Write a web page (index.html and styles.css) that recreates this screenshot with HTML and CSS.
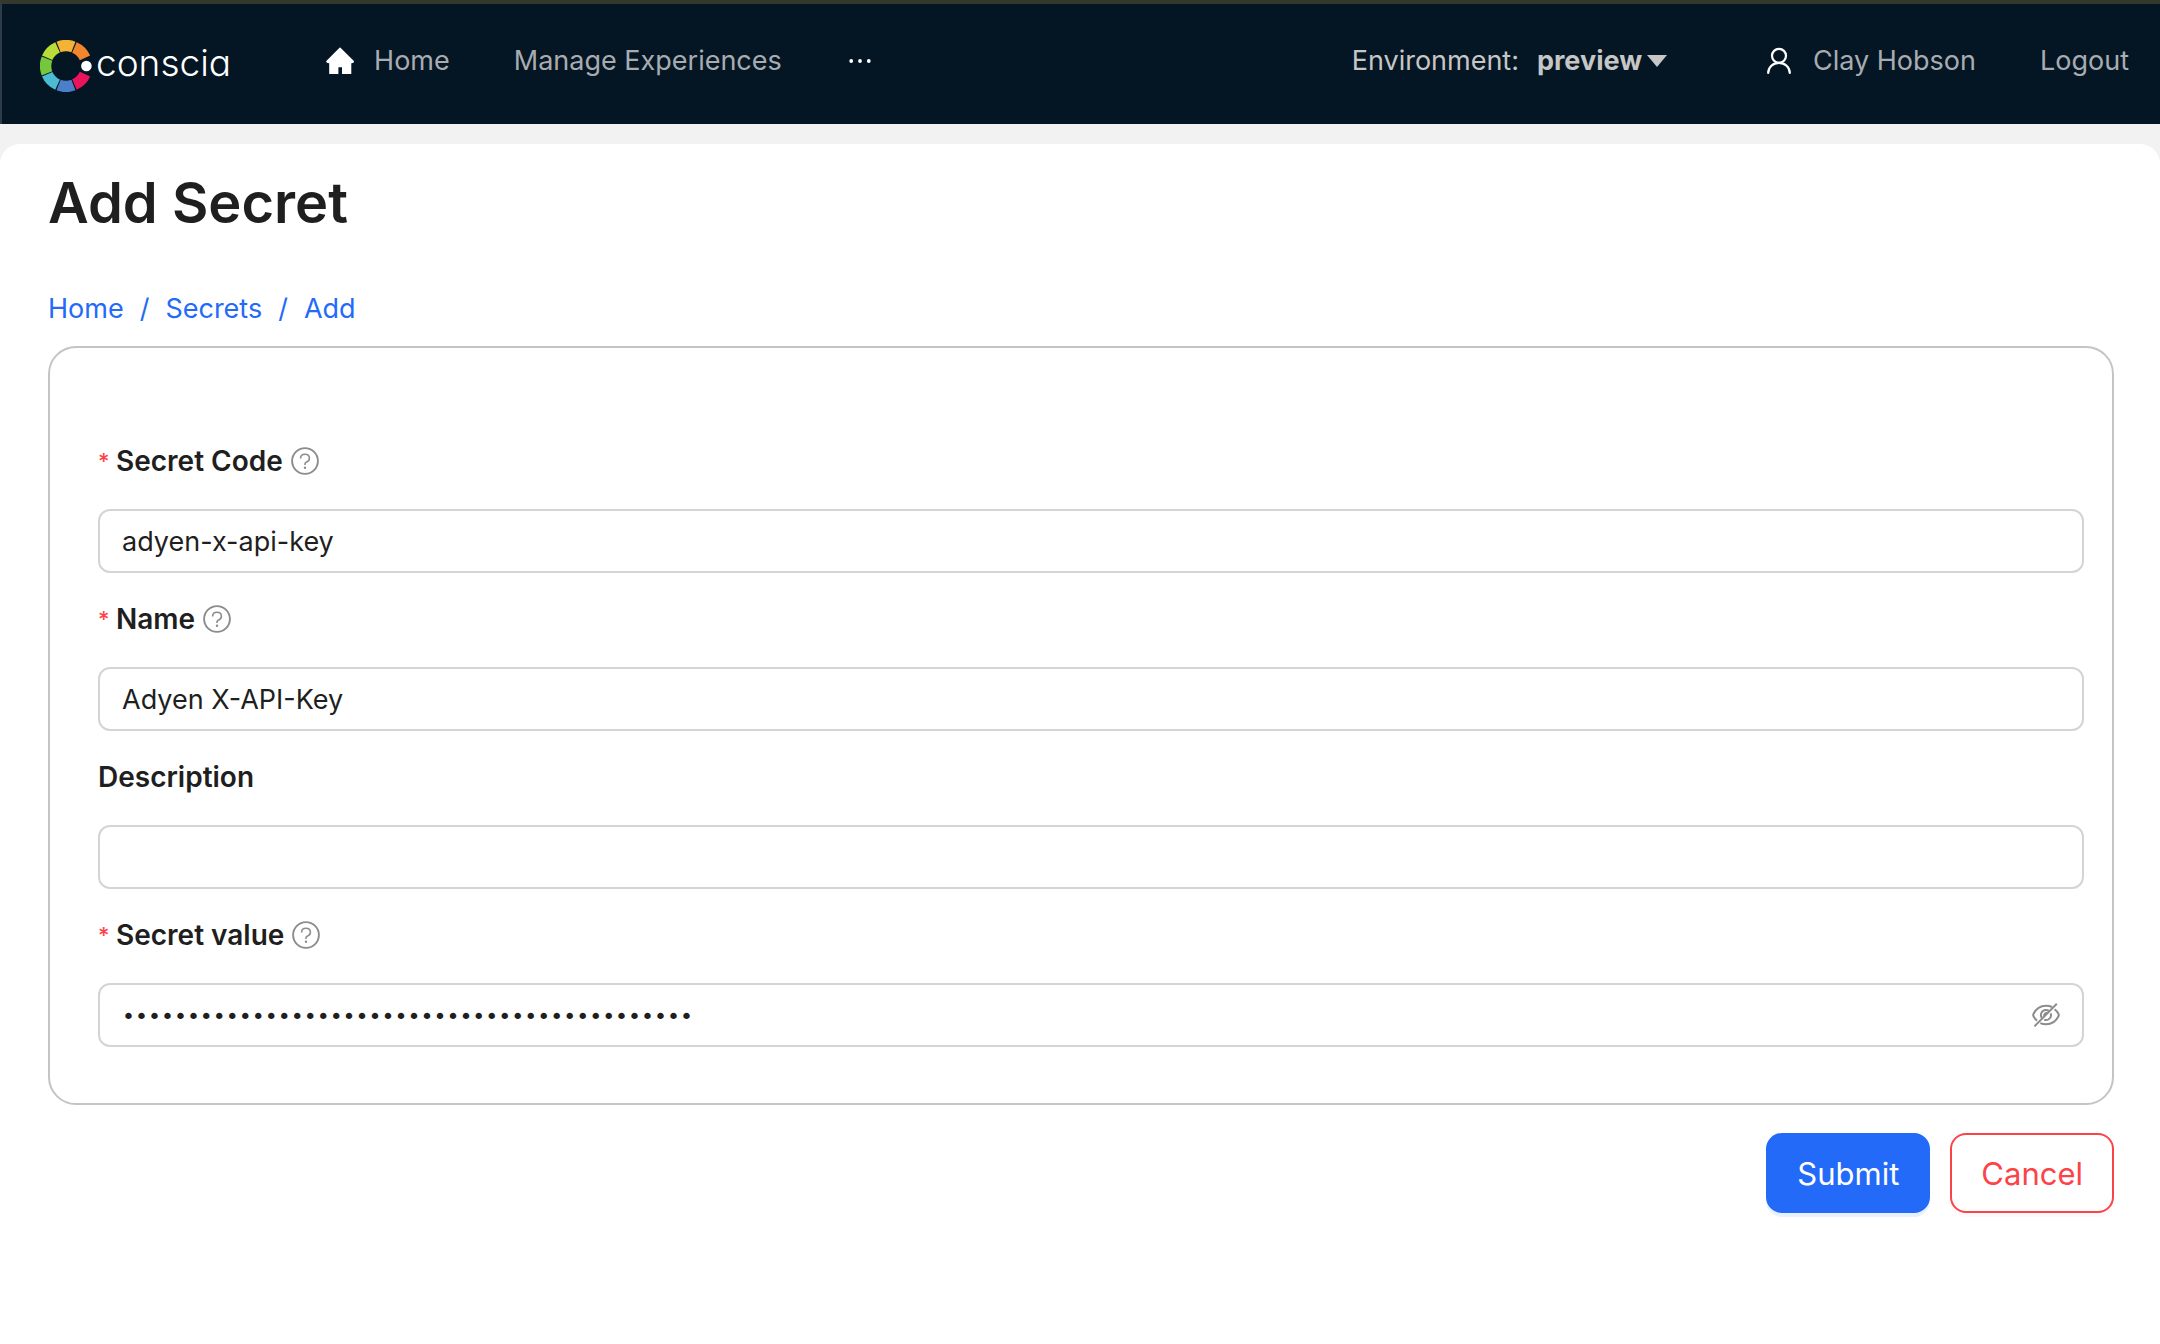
FILE: index.html
```html
<!DOCTYPE html>
<html lang="en">
<head>
<meta charset="utf-8">
<title>Add Secret</title>
<meta name="viewport" content="width=device-width, initial-scale=1">
<link rel="stylesheet" href="styles.css">
</head>
<body>
<svg class="sprite" aria-hidden="true">
  <symbol id="help" viewBox="0 0 28 28">
    <circle cx="14" cy="14" r="12.9" fill="none" stroke="currentColor" stroke-width="1.9"/>
    <path d="M9.6 11.4C9.6 8.9 11.5 7.3 14 7.3S18.4 8.9 18.4 11.2C18.4 13 17.3 14.2 15.6 14.9C14.5 15.3 14 16 14 17V18" fill="none" stroke="currentColor" stroke-width="1.6"/>
    <circle cx="14" cy="20.8" r="1.2" fill="currentColor"/>
  </symbol>
</svg>
<header class="topbar">
  <a class="logo" href="#" aria-label="conscia">
    <svg class="logo-mark" viewBox="-26 -26 52 52" aria-hidden="true">
      <g fill="none" stroke-width="11.4">
        <path stroke="#f3852d" d="M8.4 -18.6A20.4 20.4 0 0 1 19 -8.2"/>
        <path stroke="#f5b335" d="M-7.4 -19A20.4 20.4 0 0 1 7.4 -19"/>
        <path stroke="#b9dc39" d="M-18.8 -8.2A20.4 20.4 0 0 1 -8.4 -18.6"/>
        <path stroke="#76c63e" d="M-19 7.4A20.4 20.4 0 0 1 -19 -7.4"/>
        <path stroke="#4bbcd2" d="M-8.4 18.6A20.4 20.4 0 0 1 -18.8 8.2"/>
        <path stroke="#4c7fc9" d="M7.4 19A20.4 20.4 0 0 1 -7.4 19"/>
        <path stroke="#e9145c" d="M19 8.2A20.4 20.4 0 0 1 8.4 18.6"/>
      </g>
      <circle cx="20.4" cy="0" r="5.3" fill="#fff"/>
    </svg>
    <span class="logo-name">conscia</span>
  </a>
  <nav class="menu">
    <a class="menu-link" href="#">
      <svg class="icon" viewBox="0 0 28 28" aria-hidden="true"><path fill="#fff" d="M14.3 0.5L27.4 13.4Q28.4 14.5 27.6 15.6Q27 16.2 25.3 16.2V27H16V20.2H12.4V27H3.2V16.2Q1.4 16.2.6 15.5Q-.2 14.4.8 13.4L13.5 .7Q14 .2 14.3 .5Z"/></svg>
      <span>Home</span>
    </a>
    <a class="menu-link" href="#">Manage Experiences</a>
    <button class="more" type="button" aria-label="More">
      <svg viewBox="0 0 28 28" class="icon" aria-hidden="true"><g fill="#fff"><circle cx="5.2" cy="14" r="1.9"/><circle cx="14" cy="14" r="1.9"/><circle cx="22.8" cy="14" r="1.9"/></g></svg>
    </button>
  </nav>
  <div class="account">
    <div class="environment">
      <label for="environment">Environment:</label>
      <select id="environment"><option>preview</option></select>
      <svg class="caret" viewBox="0 0 20 12" aria-hidden="true"><path fill="#c6c6c6" d="M0 0H20L10 12Z"/></svg>
    </div>
    <a class="menu-link" href="#">
      <svg class="icon" viewBox="0 0 28 28" aria-hidden="true"><g fill="none" stroke="#fff" stroke-width="2.2" stroke-linecap="round"><circle cx="14" cy="8.8" r="7"/><path d="M3.2 26A10.8 10.2 0 0 1 24.8 26"/></g></svg>
      <span>Clay Hobson</span>
    </a>
    <a class="menu-link" href="#">Logout</a>
  </div>
</header>
<main class="page">
  <h1 class="title">Add Secret</h1>
  <nav class="crumbs" aria-label="Breadcrumb">
    <a href="#">Home</a><span>/</span><a href="#">Secrets</a><span>/</span><a href="#">Add</a>
  </nav>
  <form>
    <div class="card">
      <div class="field">
        <div class="label"><span class="star">*</span><label for="code">Secret Code</label><svg class="help"><use href="#help"/></svg></div>
        <input class="input" id="code" type="text" value="adyen-x-api-key">
      </div>
      <div class="field">
        <div class="label"><span class="star">*</span><label for="name">Name</label><svg class="help"><use href="#help"/></svg></div>
        <input class="input" id="name" type="text" value="Adyen X-API-Key">
      </div>
      <div class="field">
        <div class="label"><label for="description">Description</label></div>
        <input class="input" id="description" type="text">
      </div>
      <div class="field">
        <div class="label"><span class="star">*</span><label for="value">Secret value</label><svg class="help"><use href="#help"/></svg></div>
        <div class="input secret">
          <input id="value" type="password" value="01234567890123456789012345678901234567890123">
          <button class="reveal" type="button" aria-label="Show secret value">
            <svg class="icon" viewBox="0 0 28 28" aria-hidden="true"><g fill="none" stroke="currentColor" stroke-width="2"><path d="M20 6Q17.3 4.7 14 4.7C8.5 4.7 4 7.6 1.4 13Q1 14 1.4 15Q2.7 17.7 5 19.8"/><path d="M22.6 8.2Q25.2 10.2 26.6 13Q27 14 26.6 15C24 20.4 19.5 23.3 14 23.3Q10.9 23.3 8.3 22.2"/><path d="M17 9.8Q15.6 9 14 9A5 5 0 0 0 9.8 16.8"/><path d="M18.7 12.4A5 5 0 0 1 12.2 18.7"/><path d="M15.6 12.2A2.4 2.4 0 0 0 12.4 15.4"/><path d="M2.4 25.4L24.8 2.8"/></g></svg>
          </button>
        </div>
      </div>
    </div>
    <div class="actions">
      <button class="button primary" type="submit">Submit</button>
      <button class="button danger" type="button">Cancel</button>
    </div>
  </form>
</main>
</body>
</html>
```
FILE: styles.css
```css
* {
  box-sizing: border-box;
}

body {
  margin: 0;
  background: #f2f2f2;
  color: #1f1f1f;
  font-family: Inter, "Liberation Sans", sans-serif;
  font-size: 27px;
  line-height: 44px;
}

a {
  color: inherit;
  text-decoration: none;
}

input,
select,
button {
  margin: 0;
  padding: 0;
  border: 0;
  background: none;
  color: inherit;
  font: inherit;
}

.sprite {
  display: none;
}

.icon {
  display: block;
  flex: none;
  width: 28px;
  height: 28px;
}

/* Top bar */
.topbar {
  display: flex;
  align-items: center;
  height: 124px;
  padding: 0 31px 6px 38px;
  border-top: 4px solid #333a2d;
  border-left: 2px solid #2f3b46;
  background: #041523;
  color: #a8acb1;
}

.logo {
  display: flex;
  align-items: center;
  gap: 4px;
  padding-top: 10px;
  color: #fff;
}

.logo-mark {
  width: 52px;
  height: 52px;
}

.logo-name {
  margin-bottom: 6px;
  font-size: 37px;
  font-weight: 300;
  font-feature-settings: "cv11";
}

.menu {
  display: flex;
  align-items: center;
  gap: 64px;
  margin-left: 95px;
}

.menu-link {
  display: flex;
  align-items: center;
  gap: 20px;
}

.account {
  display: flex;
  align-items: center;
  gap: 64px;
  margin-left: auto;
}

.environment {
  display: flex;
  align-items: center;
  color: #c6c6c6;
}

.environment select {
  margin: 0 4px 0 18px;
  appearance: none;
  font-weight: 700;
}

.caret {
  width: 20px;
  height: 12px;
  margin-right: 34px;
}

/* Page */
.page {
  min-height: calc(100vh - 144px);
  margin-top: 20px;
  padding: 23px 46px 48px 48px;
  border-radius: 20px 20px 0 0;
  background: #fff;
}

.title {
  margin: 0;
  font-size: 56px;
  font-weight: 600;
  line-height: 72px;
}

.crumbs {
  display: flex;
  gap: 16px;
  margin: 48px 0 15px;
  color: #236af9;
}

.card {
  display: flex;
  flex-direction: column;
  gap: 24px;
  padding: 91px 28px 56px 48px;
  border: 2px solid #c4c4c4;
  border-radius: 28px;
}

.field {
  display: flex;
  flex-direction: column;
  gap: 26px;
}

.label {
  display: flex;
  align-items: center;
  gap: 8px;
  font-size: 28px;
  font-weight: 600;
}

.star {
  width: 10px;
  color: #fb4349;
  font-size: 22px;
  font-weight: 500;
  line-height: 40px;
}

.help {
  width: 28px;
  height: 28px;
  color: #8c8c8c;
}

.input {
  width: 100%;
  height: 64px;
  padding: 0 22px;
  border: 2px solid #d4d4d4;
  border-radius: 12px;
  background: #fff;
}

.secret {
  display: flex;
  align-items: center;
}

.secret input {
  flex: 1;
  padding-top: 4px;
  outline: 0;
  font-family: "DejaVu Sans", sans-serif;
  font-size: 22px;
}

.reveal {
  color: #8c8c8c;
}

.actions {
  display: flex;
  justify-content: flex-end;
  gap: 20px;
  margin-top: 28px;
}

.button {
  height: 80px;
  padding: 2px 29px 0;
  border: 2px solid;
  border-radius: 16px;
  font-size: 31px;
}

.primary {
  border-color: #236af9;
  background: #236af9;
  box-shadow: 0 4px 0 #e8f1ff;
  color: #fff;
}

.danger {
  border-color: #fb4349;
  background: #fff;
  box-shadow: 0 4px 0 #fefafa;
  color: #fb4349;
}
```
